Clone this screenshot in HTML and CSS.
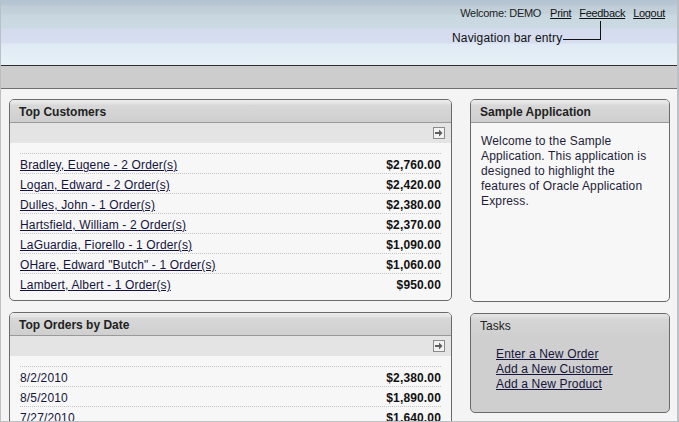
FILE: index.html
```html
<!DOCTYPE html>
<html>
<head>
<meta charset="utf-8">
<link rel="stylesheet" href="styles.css">
</head>
<body>
<div class="page">
  <header class="top">
    <nav class="navbar">
      <span class="welcome">Welcome: DEMO</span>
      <a href="#">Print</a>
      <a href="#">Feedback</a>
      <a href="#">Logout</a>
    </nav>
    <div class="callout">
      <span class="callout-text">Navigation bar entry</span>
      <span class="callout-line"></span>
    </div>
  </header>
  <div class="tabbar"></div>
  <main class="content">
    <div class="col-left">
      <section class="box">
        <div class="box-head">Top Customers</div>
        <div class="box-tools"><span class="goicon"><svg width="12" height="12" viewBox="0 0 12 12"><rect x="0.5" y="0.5" width="11" height="11" fill="#f2f2f2" stroke="#8a8a8a"/><path d="M2 5h4V2.5L9.5 6L6 9.5V7H2z" fill="#5e5e5e"/></svg></span></div>
        <div class="box-body">
          <div class="row"><a href="#">Bradley, Eugene - 2 Order(s)</a><b>$2,760.00</b></div>
          <div class="row"><a href="#">Logan, Edward - 2 Order(s)</a><b>$2,420.00</b></div>
          <div class="row"><a href="#">Dulles, John - 1 Order(s)</a><b>$2,380.00</b></div>
          <div class="row"><a href="#">Hartsfield, William - 2 Order(s)</a><b>$2,370.00</b></div>
          <div class="row"><a href="#">LaGuardia, Fiorello - 1 Order(s)</a><b>$1,090.00</b></div>
          <div class="row"><a href="#">OHare, Edward "Butch" - 1 Order(s)</a><b>$1,060.00</b></div>
          <div class="row"><a href="#">Lambert, Albert - 1 Order(s)</a><b>$950.00</b></div>
        </div>
      </section>
      <section class="box">
        <div class="box-head">Top Orders by Date</div>
        <div class="box-tools"><span class="goicon"><svg width="12" height="12" viewBox="0 0 12 12"><rect x="0.5" y="0.5" width="11" height="11" fill="#f2f2f2" stroke="#8a8a8a"/><path d="M2 5h4V2.5L9.5 6L6 9.5V7H2z" fill="#5e5e5e"/></svg></span></div>
        <div class="box-body">
          <div class="row"><span>8/2/2010</span><b>$2,380.00</b></div>
          <div class="row"><span>8/5/2010</span><b>$1,890.00</b></div>
          <div class="row"><span>7/27/2010</span><b>$1,640.00</b></div>
        </div>
      </section>
    </div>
    <div class="col-right">
      <section class="box side">
        <div class="box-head">Sample Application</div>
        <p class="side-text">Welcome to the Sample Application. This application is designed to highlight the features of Oracle Application Express.</p>
      </section>
      <section class="box tasks">
        <div class="box-head plain">Tasks</div>
        <ul class="task-list">
          <li><a href="#">Enter a New Order</a></li>
          <li><a href="#">Add a New Customer</a></li>
          <li><a href="#">Add a New Product</a></li>
        </ul>
      </section>
    </div>
  </main>
</div>
</body>
</html>
```
FILE: styles.css
```css
html, body {
  margin: 0;
  padding: 0;
}
body {
  font-family: "Liberation Sans", Arial, sans-serif;
  font-size: 12px;
  color: #1a1a1a;
  background: #f4f4f4;
}
.page {
  width: 679px;
  height: 422px;
  box-sizing: border-box;
  border-left: 1px solid #b9c1c6;
  border-right: 2px solid #b9c1c6;
  border-bottom: 1px solid #b9c1c6;
  overflow: hidden;
  background: #f4f4f4;
}
.top {
  position: relative;
  height: 65px;
  border-bottom: 1px solid #2e2e2e;
  background: linear-gradient(to bottom,
    #b3c3d2 0px, #b8c6d4 5px,
    #bfcdd8 6px, #c3d1da 14px,
    #c8d8e0 15px, #cbd9e2 28px,
    #d4dbee 29px, #d6def0 43px,
    #dfeaf4 44px, #e4eef6 58px,
    #e8f1f8 65px);
}
.navbar {
  display: flex;
  justify-content: flex-end;
  align-items: center;
  gap: 8px;
  padding: 7px 12px 0 0;
  font-size: 11px;
  line-height: 13px;
  letter-spacing: -0.3px;
}
.navbar .welcome {
  margin-right: 1px;
  color: #222;
}
.navbar a {
  color: #111;
  text-decoration: underline;
}
.callout {
  position: absolute;
  left: 451px;
  top: 31px;
  display: flex;
  align-items: center;
}
.callout-text {
  font-size: 12px;
  line-height: 15px;
  color: #111;
  letter-spacing: 0.15px;
}
.callout-line {
  width: 38px;
  height: 19px;
  margin-top: -16px;
  margin-left: 1px;
  border-right: 1px solid #111;
  border-bottom: 1px solid #111;
  box-sizing: border-box;
}
.tabbar {
  height: 22px;
  background: #cdcdcd;
  border-bottom: 1px solid #707070;
}
.content {
  display: flex;
  gap: 18px;
  padding: 10px 0 0 8px;
  background: #f4f4f4;
}
.col-left {
  width: 443px;
  display: flex;
  flex-direction: column;
  gap: 11px;
}
.col-right {
  width: 200px;
  display: flex;
  flex-direction: column;
  gap: 11px;
}
.box {
  border: 1px solid #6a6a6a;
  border-radius: 5px;
  background: #f7f7f7;
  overflow: hidden;
}
.box-head {
  box-sizing: border-box;
  height: 23px;
  padding-top: 3px;
  line-height: 19px;
  padding-left: 9px;
  font-weight: bold;
  font-size: 12px;
  color: #222;
  background: linear-gradient(to bottom, #ececec 0px, #e2e2e2 4px, #d8d8d8 5px, #cfcfcf 22px);
  border-bottom: 1px solid #9a9a9a;
}
.box-tools {
  height: 20px;
  background: #e4e4e4;
  display: flex;
  justify-content: flex-end;
  align-items: flex-start;
  padding-right: 6px;
}
.goicon {
  display: block;
  width: 12px;
  height: 12px;
  margin-top: 4px;
}
.goicon svg {
  display: block;
}
.box-body {
  padding: 10px 10px 7px 10px;
}
.row {
  display: flex;
  justify-content: space-between;
  height: 20px;
  line-height: 20px;
  border-top: 1px dotted #c4c4c4;
  box-sizing: border-box;
  padding-top: 1px;
  letter-spacing: 0.15px;
}
.row a {
  color: #14143c;
  text-decoration: underline;
}
.row span {
  color: #14143c;
}
.row b {
  color: #111;
}
.side {
  height: 203px;
  box-sizing: border-box;
}
.side-text {
  margin: 0;
  padding: 11px 14px 0 10px;
  line-height: 15px;
  color: #1e1e3a;
  letter-spacing: 0.15px;
}
.tasks {
  background: #cfcfcf;
  height: 100px;
  box-sizing: border-box;
}
.box-head.plain {
  border-bottom: none;
  font-weight: normal;
  background: linear-gradient(to bottom, #e4e4e4 0px, #dcdcdc 4px, #d6d6d6 5px, #cfcfcf 22px);
}
.task-list {
  list-style: none;
  margin: 0;
  padding: 10px 0 0 25px;
  line-height: 15px;
  letter-spacing: 0.15px;
}
.task-list a {
  color: #14143c;
  text-decoration: underline;
}
```
